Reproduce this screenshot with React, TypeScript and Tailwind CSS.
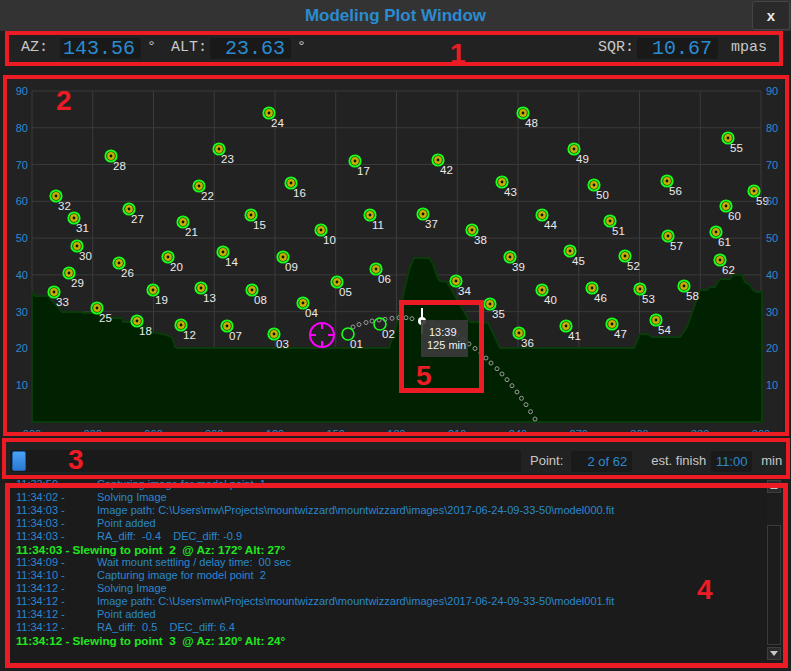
import React from 'react'

const BLUE = '#2b8bd0'
const SANS = "'Liberation Sans', Arial, sans-serif"

const X0 = 32
const X1 = 761
const Y0 = 422
const YT = 91

const points: [string, number, number][] = [
  ['03', 274, 334], ['04', 303, 303], ['05', 337, 282], ['06', 376, 269], ['07', 227, 326],
  ['08', 252, 290], ['09', 283, 257], ['10', 321, 230], ['11', 370, 215], ['12', 181, 325],
  ['13', 201, 288], ['14', 223, 252], ['15', 251, 215], ['16', 291, 183], ['17', 355, 161],
  ['18', 137, 321], ['19', 153, 290], ['20', 168, 257], ['21', 183, 222], ['22', 199, 186],
  ['23', 219, 149], ['24', 269, 113], ['25', 97, 308], ['26', 119, 263], ['27', 129, 209],
  ['28', 111, 156], ['29', 69, 273], ['30', 77, 246], ['31', 74, 218], ['32', 56, 196],
  ['33', 54, 292], ['34', 456, 281], ['35', 490, 304], ['36', 519, 333], ['37', 423, 214],
  ['38', 472, 230], ['39', 510, 257], ['40', 542, 290], ['41', 566, 326], ['42', 438, 160],
  ['43', 502, 182], ['44', 542, 215], ['45', 570, 251], ['46', 592, 288], ['47', 612, 324],
  ['48', 523, 113], ['49', 574, 149], ['50', 594, 185], ['51', 610, 221], ['52', 625, 256],
  ['53', 640, 289], ['54', 656, 320], ['55', 728, 138], ['56', 667, 181], ['57', 668, 236],
  ['58', 684, 286], ['59', 754, 191], ['60', 726, 206], ['61', 716, 232], ['62', 720, 260],
]

const done: [string, number, number][] = [
  ['01', 348, 334],
  ['02', 380, 324],
]

const track: [number, number][] = [
  [353, 327], [359, 324.5], [366, 322.5], [372, 321], [379, 320], [385, 319.3], [392, 318.3],
  [399, 317.7], [406, 317.7], [412, 318.7], [432, 323], [438, 325.3], [457, 335], [463, 339.5],
  [469, 344], [475, 348.5], [481, 353], [486, 358], [491, 363], [497, 368.7], [502, 374],
  [507, 379.7], [512, 385.7], [517, 392], [521.5, 398.3], [526, 404.7], [530.5, 411.7], [535, 419],
]

const horizon =
  '32,422 32,292 35,296 48,296 53,302 58,307 62,312 82,312 83,313 97,313 110,318 122,318 123,322 135,322 ' +
  '147,328 152,332 163,334 172,337 175,347 177,348 389,348 397,323 405,287 410,267 414,258 429,258 433,264 ' +
  '437,276 440,281 447,282 450,287 463,310 470,322 480,322 488,323 493,333 500,348 634,348 640,334 648,334 ' +
  '652,337 680,337 687,327 693,310 700,290 707,290 710,287 715,287 717,283 720,279 730,279 733,275 742,275 ' +
  '745,282 750,285 753,290 757,292 762,292 762,422'

const log: { t: string; m: string; hl?: boolean }[] = [
  { t: '11:33:59 -', m: 'Capturing image for model point  1' },
  { t: '11:34:02 -', m: 'Solving Image' },
  { t: '11:34:03 -', m: 'Image path: C:\\Users\\mw\\Projects\\mountwizzard\\mountwizzard\\images\\2017-06-24-09-33-50\\model000.fit' },
  { t: '11:34:03 -', m: 'Point added' },
  { t: '11:34:03 -', m: 'RA_diff:  -0.4    DEC_diff: -0.9' },
  { t: '', m: '11:34:03 - Slewing to point  2  @ Az: 172° Alt: 27°', hl: true },
  { t: '11:34:09 -', m: 'Wait mount settling / delay time:  00 sec' },
  { t: '11:34:10 -', m: 'Capturing image for model point  2' },
  { t: '11:34:12 -', m: 'Solving Image' },
  { t: '11:34:12 -', m: 'Image path: C:\\Users\\mw\\Projects\\mountwizzard\\mountwizzard\\images\\2017-06-24-09-33-50\\model001.fit' },
  { t: '11:34:12 -', m: 'Point added' },
  { t: '11:34:12 -', m: 'RA_diff:  0.5    DEC_diff: 6.4' },
  { t: '', m: '11:34:12 - Slewing to point  3  @ Az: 120° Alt: 24°', hl: true },
]

function ValueBox({ children, className }: { children: React.ReactNode; className: string }) {
  return (
    <div className={`h-[21px] rounded-[3px] bg-[#191919] text-right pr-[6px] leading-[21px] text-[#2b8bd0] ${className}`}>
      {children}
    </div>
  )
}

function Plot() {
  const vx = Array.from({ length: 13 }, (_, i) => X0 + (i * (X1 - X0)) / 12)
  const hy = Array.from({ length: 10 }, (_, i) => Y0 - (i * (Y0 - YT)) / 9)

  return (
    <div className="mx-[8px] mt-[16px] h-[358px] shrink-0 bg-[#222222] overflow-hidden">
      <svg width={772} height={358} viewBox="8 78 772 358" fontFamily={SANS}>
        {hy.map((y, i) => (
          <line key={'h' + i} x1={X0} x2={X1} y1={y} y2={y} stroke="#3b3b3b" strokeWidth={1} />
        ))}
        {vx.map((x, i) => (
          <line key={'v' + i} x1={x} x2={x} y1={YT} y2={Y0} stroke="#3b3b3b" strokeWidth={1} />
        ))}

        <polygon points={horizon} fill="#012201" stroke="#0b3a0b" strokeWidth={2} />

        {track.map(([x, y], i) => (
          <circle key={'t' + i} cx={x} cy={y} r={2} fill="none" stroke="#9a9a9a" strokeWidth={1} />
        ))}

        {points.map(([l, x, y]) => (
          <g key={l}>
            <circle cx={x} cy={y} r={5.6} fill="#111" stroke="#19ff19" strokeWidth={2} />
            <circle cx={x} cy={y} r={3.9} fill="#c4b000" />
            <circle cx={x} cy={y} r={1.4} fill="#111" />
            <text x={x + 2} y={y + 14} fontSize={11.5} fill="#ececec">{l}</text>
          </g>
        ))}

        {done.map(([l, x, y]) => (
          <g key={l}>
            <circle cx={x} cy={y} r={6} fill="none" stroke="#19ff19" strokeWidth={1.6} />
            <text x={x + 2} y={y + 14} fontSize={11.5} fill="#ececec">{l}</text>
          </g>
        ))}

        <g stroke="#ff00ff" strokeWidth={2} fill="none">
          <circle cx={322} cy={335} r={12} />
          <line x1={310} x2={316} y1={335} y2={335} />
          <line x1={328} x2={334} y1={335} y2={335} />
          <line x1={322} x2={322} y1={323} y2={329} />
          <line x1={322} x2={322} y1={341} y2={347} />
        </g>

        <line x1={422} x2={422} y1={308} y2={334} stroke="#fff" strokeWidth={2} />
        <circle cx={422} cy={321} r={4} fill="#fff" />
        <circle cx={422} cy={321} r={1.2} fill="#333" />

        <rect x={421} y={320} width={47} height={37} fill="#3a3a3a" fillOpacity={0.92} />
        <text x={429} y={336} fontSize={11} fill="#f2f2f2">13:39</text>
        <text x={427} y={349} fontSize={11} fill="#f2f2f2">125 min</text>

        {hy.slice(1).map((y, i) => (
          <g key={'l' + i} fontSize={11} fill={BLUE}>
            <text x={28} y={y + 4} textAnchor="end">{(i + 1) * 10}</text>
            <text x={766} y={y + 4}>{(i + 1) * 10}</text>
          </g>
        ))}
        {vx.map((x, i) => (
          <text key={'x' + i} x={x} y={438} fontSize={11} fill={BLUE} textAnchor="middle">
            {String(i * 30).padStart(3, '0')}
          </text>
        ))}
      </svg>
    </div>
  )
}

function Tri({ up }: { up?: boolean }) {
  return (
    <svg width={8} height={5} viewBox="0 0 8 5">
      <polygon points={up ? '0,5 8,5 4,0' : '0,0 8,0 4,5'} fill="#c8c8c8" />
    </svg>
  )
}

function Log() {
  return (
    <div className="mx-[10px] mt-[4px] h-[184px] shrink-0 bg-[#1b1b1b] flex overflow-hidden">
      <div className="flex-1 pl-[6px] text-[11px] leading-[13px] overflow-hidden">
        {log.map((l, i) =>
          l.hl ? (
            <div key={i} className="whitespace-pre font-bold text-[11.7px] text-[#20e820]">{l.m}</div>
          ) : (
            <div key={i} className="whitespace-pre text-[#2a88cc] flex">
              <span className="w-[81px] shrink-0">{l.t}</span>
              <span>{l.m}</span>
            </div>
          ),
        )}
      </div>
      <div className="w-[14px] flex flex-col py-[2px]">
        <div className="h-[13px] border border-[#3e3e3e] bg-[#2a2a2a] flex items-center justify-center">
          <Tri up />
        </div>
        <div className="flex-1 flex flex-col py-[2px]">
          <div className="h-[30px] bg-[#1d1d1d]" />
          <div className="flex-1 border border-[#3a3a3a] bg-[#1c1c1c]" />
        </div>
        <div className="h-[13px] border border-[#3e3e3e] bg-[#2a2a2a] flex items-center justify-center">
          <Tri />
        </div>
      </div>
    </div>
  )
}

function Mark({ n, className }: { n: string; className: string }) {
  return (
    <div className={`absolute text-[28px] leading-none font-bold text-[#ed1c24] ${className}`}>{n}</div>
  )
}

export default function App() {
  return (
    <div className="relative w-[791px] h-[671px] overflow-hidden bg-[#1e1e1e] flex flex-col font-['Liberation_Sans',Arial,sans-serif]">
      <div className="h-[31px] shrink-0 bg-[#333333] grid grid-cols-[1fr_auto_1fr] items-center">
        <div />
        <div className="text-[17px] font-bold text-[#2b8bd0]">Modeling Plot Window</div>
        <div className="flex justify-end h-full pt-[1px] pr-[1px]">
          <button className="w-[38px] h-[29px] rounded-[3px] border border-[#454545] bg-[#2a2a2a] text-[#e8e8e8] font-bold text-[15px] leading-none">
            x
          </button>
        </div>
      </div>

      <div className="mx-[9px] mt-[4px] h-[27px] shrink-0 bg-[#222222] flex items-center pl-[12px] font-['Liberation_Mono',monospace] text-[15px] text-[#c8c8c8]">
        <span>AZ:</span>
        <ValueBox className="ml-[12px] w-[81px] text-[20px]">143.56</ValueBox>
        <span className="ml-[6px]">°</span>
        <span className="ml-[15px]">ALT:</span>
        <ValueBox className="ml-[3px] w-[81px] text-[20px]">23.63</ValueBox>
        <span className="ml-[6px]">°</span>
        <div className="flex-1" />
        <span>SQR:</span>
        <ValueBox className="ml-[3px] w-[81px] text-[20px]">10.67</ValueBox>
        <span className="ml-[13px] mr-[15px]">mpas</span>
      </div>

      <Plot />

      <div className="mx-[6px] mt-[6px] h-[32px] shrink-0 bg-[#222222] flex items-center pt-[6px] pl-[4px] text-[13px] text-[#c8c8c8]">
        <div className="w-[511px] h-[22px] rounded-[3px] bg-[#1a1a1a] py-[1px] pl-[2px]">
          <div className="w-[14px] h-full rounded-[2px] border border-[#1f5fa8] bg-gradient-to-b from-[#4aa3f5] to-[#2a78d0]" />
        </div>
        <span className="ml-[9px]">Point:</span>
        <div className="ml-[8px] w-[61px] h-[21px] rounded-[3px] bg-[#1a1a1a] text-right pr-[5px] leading-[21px] text-[#2b8bd0]">
          2 of 62
        </div>
        <span className="ml-[19px]">est. finish</span>
        <div className="ml-[5px] w-[41px] h-[21px] rounded-[3px] bg-[#1a1a1a] text-center leading-[21px] text-[#2b8bd0]">
          11:00
        </div>
        <span className="ml-[9px]">min</span>
      </div>

      <Log />

      <div className="absolute left-[5px] top-[31px] w-[778px] h-[35px] border-[4px] border-[#ed1c24] pointer-events-none" />
      <div className="absolute left-[3px] top-[75px] w-[786px] h-[361px] border-[4px] border-[#ed1c24] pointer-events-none" />
      <div className="absolute left-[2px] top-[438px] w-[788px] h-[41px] border-[4px] border-[#ed1c24] pointer-events-none" />
      <div className="absolute left-[5px] top-[483px] w-[783px] h-[185px] border-[5px] border-[#ed1c24] pointer-events-none" />
      <div className="absolute left-[399px] top-[300px] w-[85px] h-[93px] border-[5px] border-[#ed1c24] pointer-events-none" />
      <Mark n="1" className="left-[450px] top-[40px]" />
      <Mark n="2" className="left-[56px] top-[87px]" />
      <Mark n="3" className="left-[68px] top-[446px]" />
      <Mark n="4" className="left-[697px] top-[576px]" />
      <Mark n="5" className="left-[416px] top-[362px]" />
    </div>
  )
}
